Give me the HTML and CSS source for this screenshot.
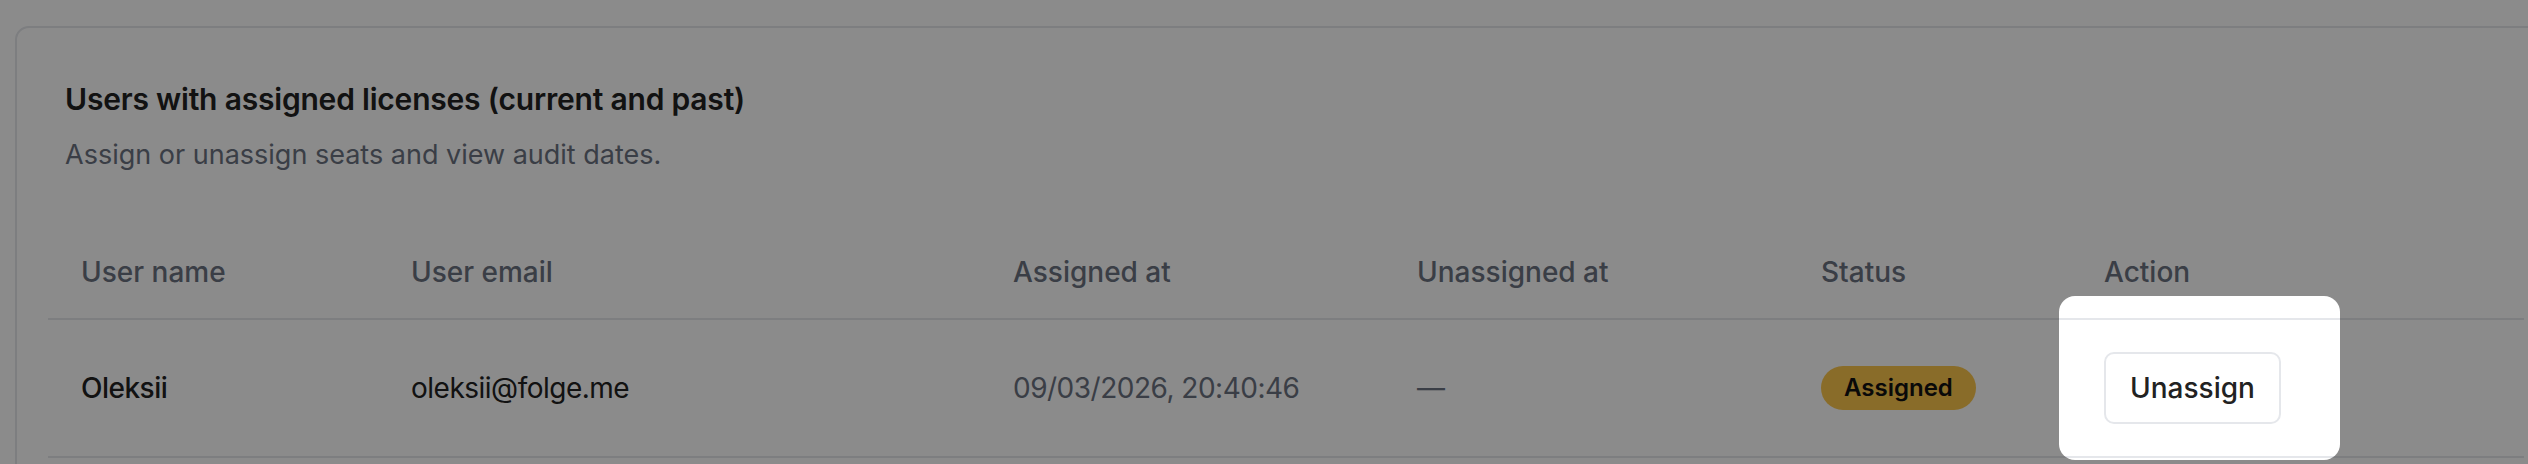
FILE: index.html
```html
<!DOCTYPE html>
<html lang="en">
<head>
<meta charset="utf-8">
<title>Licenses</title>
<link rel="stylesheet" href="styles.css">
</head>
<body>
  <section class="card">
    <header class="card-head">
      <h2 class="card-title">Users with assigned licenses (current and past)</h2>
      <p class="card-sub">Assign or unassign seats and view audit dates.</p>
    </header>
    <table class="users">
      <colgroup>
        <col class="c-name">
        <col class="c-email">
        <col class="c-assigned">
        <col class="c-unassigned">
        <col class="c-status">
        <col class="c-action">
      </colgroup>
      <thead>
        <tr>
          <th>User name</th>
          <th>User email</th>
          <th>Assigned at</th>
          <th>Unassigned at</th>
          <th>Status</th>
          <th>Action</th>
        </tr>
      </thead>
      <tbody>
        <tr>
          <td class="name">Oleksii</td>
          <td class="email">oleksii@folge.me</td>
          <td class="muted">09/03/2026, 20:40:46</td>
          <td class="muted">—</td>
          <td><span class="badge">Assigned</span></td>
          <td><button class="btn" type="button">Unassign</button></td>
        </tr>
      </tbody>
    </table>
  </section>
  <div class="spotlight"></div>
</body>
</html>
```

FILE: styles.css
```css
html, body {
  margin: 0;
  padding: 0;
  background: #ffffff;
  overflow: hidden;
}

body {
  width: 2528px;
  height: 464px;
  padding: 26px 0 0 15px;
  box-sizing: border-box;
  font-family: Inter, "Noto Sans", "Liberation Sans", sans-serif;
  color: #222222;
  position: relative;
}

.card {
  width: 2542px;
  height: 600px;
  box-sizing: border-box;
  border: 2px solid #e5e7eb;
  border-radius: 14px;
  background: #ffffff;
  padding: 53px 31px 0 31px;
}

.card-head {
  padding-left: 17px;
}

.card-title {
  margin: 0;
  font-size: 30px;
  line-height: 36px;
  font-weight: 600;
  color: #222222;
  letter-spacing: -0.2px;
}

.card-sub {
  margin: 20px 0 0 0;
  font-size: 27px;
  line-height: 36px;
  font-weight: 400;
  color: #6b7280;
}

.users {
  margin-top: 53px;
  width: 2476px;
  border-collapse: collapse;
  table-layout: fixed;
}

.c-name { width: 330px; }
.c-email { width: 602px; }
.c-assigned { width: 404px; }
.c-unassigned { width: 404px; }
.c-status { width: 283px; }
.c-action { width: 453px; }

.users th {
  text-align: left;
  font-size: 28px;
  line-height: 40px;
  font-weight: 500;
  color: #6b7280;
  padding: 26px 16px 26px 33px;
  border-bottom: 2px solid #e5e7eb;
}

.users td {
  font-size: 28px;
  line-height: 40px;
  font-weight: 400;
  color: #222222;
  letter-spacing: -0.5px;
  padding: 32px 16px 32px 33px;
  vertical-align: middle;
  border-bottom: 2px solid #e5e7eb;
  white-space: nowrap;
}

.users td.name {
  font-weight: 500;
}

.users td.muted {
  color: #6b7280;
}

.badge {
  display: inline-flex;
  align-items: center;
  height: 44px;
  padding: 0 23px;
  border-radius: 22px;
  background: #fcc64c;
  color: #111111;
  font-size: 24px;
  font-weight: 600;
  letter-spacing: 0;
  vertical-align: middle;
}

.btn {
  display: inline-flex;
  align-items: center;
  justify-content: center;
  height: 72px;
  padding: 0 24px;
  box-sizing: border-box;
  border: 2px solid #e5e7eb;
  border-radius: 10px;
  background: #ffffff;
  color: #222222;
  font-family: inherit;
  font-size: 28px;
  font-weight: 500;
  letter-spacing: 0;
  vertical-align: middle;
}

.spotlight {
  position: absolute;
  left: 2059px;
  top: 296px;
  width: 281px;
  height: 164px;
  border-radius: 16px;
  box-shadow: 0 0 0 4000px rgba(0, 0, 0, 0.455);
  pointer-events: none;
}
```
